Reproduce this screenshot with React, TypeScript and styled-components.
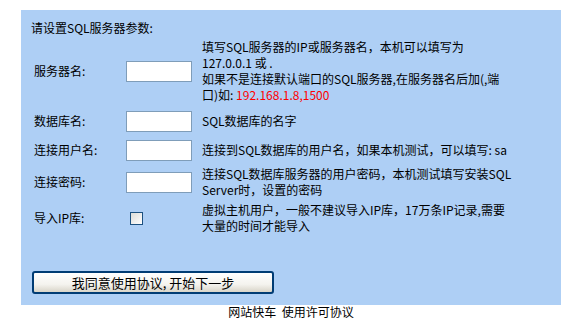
import type {ReactNode} from "react";
import styled, {createGlobalStyle} from "styled-components";

const GlobalStyle = createGlobalStyle`
    body{
        margin: 0;
        background: #ffffff;
        font-family: "SimSun", "Noto Sans CJK SC", sans-serif;
        font-size: 12px;
        color: #000000;
    }
`

interface Field{
    label: string;
    kind: "text" | "check";
    lines: ReactNode[];
}

function getFields(): Field[]{
    return [
        {
            label: "服务器名:",
            kind: "text",
            lines: [
                "填写SQL服务器的IP或服务器名，本机可以填写为",
                "127.0.0.1 或 .",
                "如果不是连接默认端口的SQL服务器,在服务器名后加(,端",
                <>口)如: <Red>192.168.1.8,1500</Red></>,
            ],
        },
        {label: "数据库名:", kind: "text", lines: ["SQL数据库的名字"]},
        {label: "连接用户名:", kind: "text", lines: ["连接到SQL数据库的用户名，如果本机测试，可以填写: sa"]},
        {
            label: "连接密码:",
            kind: "text",
            lines: ["连接SQL数据库服务器的用户密码，本机测试填写安装SQL", "Server时，设置的密码"],
        },
        {
            label: "导入IP库:",
            kind: "check",
            lines: ["虚拟主机用户，一般不建议导入IP库，17万条IP记录,需要", "大量的时间才能导入"],
        },
    ];
}

function App(){
    const fields = getFields();

    return(
        <Page>
            <GlobalStyle/>
            <Panel>
                <Title>请设置SQL服务器参数:</Title>
                <FormGrid>
                    {fields.map((f) => (
                        <Row key={f.label}>
                            <Label>{f.label}</Label>
                            <Cell>
                                {f.kind === "text" ? <TextInput type="text"/> : <CheckBox type="checkbox"/>}
                            </Cell>
                            <Desc>
                                {f.lines.map((line, i) => (
                                    <DescLine key={i}>{line}</DescLine>
                                ))}
                            </Desc>
                        </Row>
                    ))}
                </FormGrid>
                <SubmitButton type="button">我同意使用协议, 开始下一步</SubmitButton>
            </Panel>
            <Footer>网站快车&nbsp;&nbsp;使用许可协议</Footer>
        </Page>
    )
}

const Page = styled.div`
    width: 575px;
    padding-top: 10px;
    box-sizing: border-box;
`
const Panel = styled.div`
    margin-left: 21px;
    width: 540px;
    height: 295px;
    box-sizing: border-box;
    background-color: #aecff5;
    padding: 10px 0 0 10px;
    display: flex;
    flex-direction: column;
    align-items: flex-start;
`
const Title = styled.div`
    line-height: 16px;
    height: 16px;
`
const FormGrid = styled.div`
    margin-left: 3px;
    display: grid;
    grid-template-columns: 92px 76px 1fr;
    grid-template-rows: 70px 30px 28px 36px 36px;
`
const Row = styled.div`
    display: contents;
`
const Label = styled.div`
    display: flex;
    align-items: center;
    line-height: 16px;
`
const Cell = styled.div`
    display: flex;
    align-items: center;
`
const TextInput = styled.input`
    width: 66px;
    height: 21px;
    box-sizing: border-box;
    margin: 0;
    border: 1px solid #7f9db9;
    background: #ffffff;
    outline: none;
`
const CheckBox = styled.input`
    appearance: none;
    width: 13px;
    height: 13px;
    margin: 0 0 0 4px;
    border: 1px solid #1c5180;
    box-sizing: border-box;
    background: linear-gradient(135deg, #dcdcd7 0%, #ffffff 100%);
`
const Desc = styled.div`
    display: flex;
    flex-direction: column;
    justify-content: center;
`
const DescLine = styled.div`
    line-height: 16px;
    white-space: nowrap;
`
const Red = styled.span`
    color: #ff0000;
`
const SubmitButton = styled.button`
    margin: 35px 0 0 1px;
    width: 242px;
    height: 23px;
    box-sizing: border-box;
    border: 2px solid #003c74;
    border-radius: 3px;
    background: linear-gradient(to bottom, #ffffff 0%, #f4f3ee 60%, #d8d4c8 100%);
    font-family: "SimSun", "Noto Sans CJK SC", sans-serif;
    font-size: 13px;
    color: #000000;
    padding: 0;
    line-height: 17px;
`
const Footer = styled.div`
    text-align: center;
    width: 582px;
    line-height: 14px;
`

export default App;
